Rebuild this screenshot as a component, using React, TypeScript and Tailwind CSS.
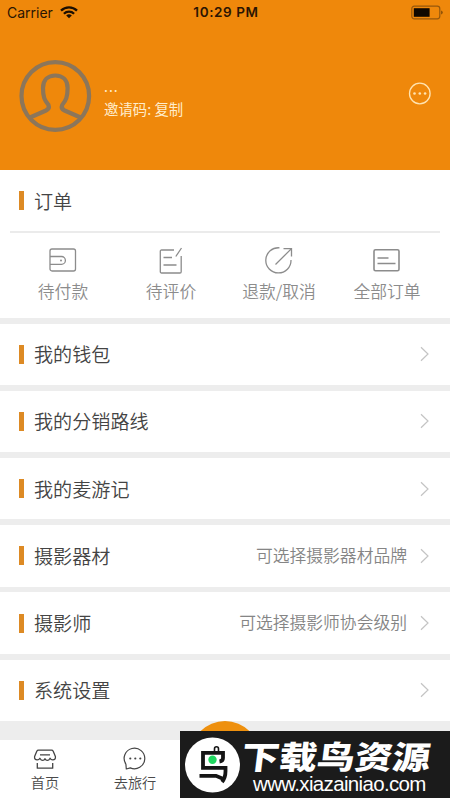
import type { ReactNode } from "react";

const orderTabs: { label: string; icon: ReactNode }[] = [
  {
    label: "待付款",
    icon: (
      <>
        <rect x="2" y="4" width="25.5" height="22" rx="2" />
        <path d="M2 11.5h11.5a3.900 3.900 0 0 1 0 7.800H2" />
        <circle cx="13" cy="15.400" r="1" fill="currentColor" stroke="none" />
      </>
    ),
  },
  {
    label: "待评价",
    icon: (
      <>
        <path d="M18 5H5.5a1.2 1.2 0 0 0-1.2 1.2v20.600a1.200 1.200 0 0 0 1.200 1.200h18.500a1.200 1.200 0 0 0 1.200-1.200V11" />
        <path d="M25.500 3 19.800 11.500M7.500 12.500h8.500M7.500 20h13" />
      </>
    ),
  },
  {
    label: "退款/取消",
    icon: (
      <>
        <path d="M15.500 2.800A12.600 12.600 0 1 0 27 15" />
        <path d="M11.500 19.500 27.500 3.600M19.500 3.600h8v8" />
      </>
    ),
  },
  {
    label: "全部订单",
    icon: (
      <g strokeWidth="1.600">
        <rect x="2" y="4.800" width="25" height="21" rx="1.500" />
        <path d="M5.500 13h11M5.500 18.500h18" />
      </g>
    ),
  },
];

const menuRows = [
  { title: "我的钱包" },
  { title: "我的分销路线" },
  { title: "我的麦游记" },
  { title: "摄影器材", value: "可选择摄影器材品牌" },
  { title: "摄影师", value: "可选择摄影师协会级别" },
  { title: "系统设置" },
];

function Title({ children }: { children: ReactNode }) {
  return (
    <div className="flex items-center">
      <span className="w-[5px] h-[19px] bg-[#dd8a24]" />
      <span className="ml-[10px] text-[19.100px] leading-7 font-[350] text-[#444]">{children}</span>
    </div>
  );
}

function StatusBar() {
  return (
    <div className="h-[25px] grid grid-cols-3 items-center pl-[7px] pr-[7px] text-[#2a1503] font-[Inter,sans-serif]">
      <div className="flex items-center gap-[7px]">
        <span className="text-[14px] leading-none">Carrier</span>
        <svg width="18" height="13" viewBox="0 0 18 13" fill="none" stroke="#1c0f02" strokeWidth="2.300">
          <path d="M1 4.700a11.500 11.500 0 0 1 16 0M3.900 7.700a7.300 7.300 0 0 1 10.200 0" />
          <path d="M9 12.300 6.200 9.500a4 4 0 0 1 5.600 0Z" fill="#1c0f02" stroke="none" />
        </svg>
      </div>
      <span className="ml-[2px] text-center text-[13.500px] leading-none font-semibold whitespace-nowrap tracking-[0.600px]">10:29 PM</span>
      <svg className="justify-self-end" width="32" height="15" viewBox="0 0 32 15">
        <rect x="0.800" y="1.200" width="28" height="12.600" rx="2.500" fill="none" stroke="#96570c" strokeWidth="1.200" />
        <rect x="2.800" y="3.200" width="15.800" height="8.600" fill="#100800" />
        <path d="M30.300 5.500v4q1.300-.5 1.300-2t-1.300-2" fill="#6b3d06" />
      </svg>
    </div>
  );
}

export default function App() {
  return (
    <main className="relative w-[450px] h-[800px] overflow-hidden flex flex-col bg-white font-['Noto_Sans_CJK_SC',sans-serif]">
      <header className="h-[170px] shrink-0 bg-[#ef880b]">
        <StatusBar />
        <div className="flex items-center pl-[19px] pr-[19px] pt-[34px]">
          <svg width="73" height="73" viewBox="0 0 73 73" fill="none" stroke="#8c765a" strokeWidth="4.200">
            <circle cx="36.300" cy="37" r="33.800" />
            <path d="M11 58.500 27 51.500Q31 49.500 29.500 46C25.500 41.500 24 38 24 29C24 21 29 16.500 36.300 16.500S48.600 21 48.600 29C48.600 38 47 41.500 43.200 46Q41.600 49.500 45.600 51.500L61.600 58.500" />
          </svg>
          <div className="ml-3 mt-[4px] flex-1 text-[#ffedcb]">
            <div className="text-[14px] leading-[18px] tracking-[1px]">...</div>
            <div className="mt-[4px] text-[14.400px] leading-5">邀请码: 复制</div>
          </div>
          <svg className="mt-[-5px]" width="23" height="23" viewBox="0 0 23 23">
            <circle cx="11.800" cy="11.500" r="10.300" fill="none" stroke="#ffe3b0" strokeWidth="1.300" />
            <g fill="#ffe3b0">
              <circle cx="6.500" cy="11.500" r="1.300" />
              <circle cx="11.800" cy="11.500" r="1.300" />
              <circle cx="17.100" cy="11.500" r="1.300" />
            </g>
          </svg>
        </div>
      </header>

      <section className="h-[148px] shrink-0">
        <div className="h-[61px] pl-[19px] flex items-center">
          <Title>订单</Title>
        </div>
        <div className="mx-[10px] h-[2px] bg-[#ebebeb]" />
        <div className="mx-[9px] pt-[12px] grid grid-cols-4">
          {orderTabs.map((tab) => (
            <div key={tab.label} className="flex flex-col items-center text-[#8c8c8c]">
              <svg width="30" height="30" viewBox="0 0 30 30" fill="none" stroke="currentColor" strokeWidth="1.300">
                {tab.icon}
              </svg>
              <span className="mt-[4px] text-[16.800px] leading-6 font-[350] whitespace-nowrap">{tab.label}</span>
            </div>
          ))}
        </div>
      </section>

      <div className="shrink-0 flex flex-col gap-[5.800px] bg-[#ededed] pt-[5.600px] pb-[19.500px]">
        {menuRows.map((row) => (
          <div key={row.title} className="h-[61.400px] bg-white flex items-center justify-between pl-[19px] pr-[20px]">
            <Title>{row.title}</Title>
            <div className="flex items-center gap-[12px]">
              <span className="text-[16.800px] font-[350] text-[#858585]">{row.value}</span>
              <svg width="11" height="16" viewBox="0 0 11 16" fill="none" stroke="#c4c4c4" strokeWidth="1.200">
                <path d="m2 1.200 7 6.800-7 6.800" />
              </svg>
            </div>
          </div>
        ))}
      </div>

      <nav className="flex-1 grid grid-cols-5 pt-[7px] text-[#4a4a4a]">
        <div className="flex flex-col items-center">
          <svg width="24" height="24" viewBox="0 0 24 24" fill="none" stroke="#444" strokeWidth="1.300" strokeLinejoin="round">
            <path d="M5.500 3.200h13q1.200 0 1.700 1l2.200 5.400q.4 3.200-2.600 3.200-2 0-2.700-1.600-1.200 2.200-2.800 2.200T12 11.700q-.7 1.700-2.300 1.700t-2.800-2.200q-.7 1.600-2.700 1.600-3 0-2.600-3.200l2.200-5.400q.5-1 1.700-1Z" />
            <path d="M7 7.800h10M4.300 16v5.200h15.400V16" />
          </svg>
          <span className="mt-[1px] text-[14.200px] leading-5 font-[350]">首页</span>
        </div>
        <div className="flex flex-col items-center">
          <svg width="24" height="24" viewBox="0 0 24 24" fill="none" stroke="#444" strokeWidth="1.200">
            <path d="M2.900 17.200A10.300 10.300 0 1 1 7.300 20.900L3.300 22Z" strokeLinejoin="round" />
            <g fill="#444" stroke="none">
              <circle cx="7.300" cy="11.500" r="1.100" />
              <circle cx="12.300" cy="11.500" r="1.100" />
              <circle cx="17.300" cy="11.500" r="1.100" />
            </g>
          </svg>
          <span className="mt-[1px] text-[14.200px] leading-5 font-[350]">去旅行</span>
        </div>
      </nav>

      {/* raised centre button */}
      <div className="absolute left-[190px] top-[721px] size-[70px] rounded-full bg-[#ee900e]" />

      <div className="absolute right-0 bottom-[2px] w-[270px] h-[67px] bg-[#1b1b1b] text-white flex items-center pl-[5px]">
        <svg className="shrink-0" width="55" height="56" viewBox="0 0 55 56">
          <circle cx="27.500" cy="28" r="27.500" fill="#fff" />
          <g fill="none" stroke="#151515" strokeWidth="3.800">
            <path d="M29.500 15v-3.200q0-2 2-2t2 2V15" strokeWidth="1.600" />
            <path d="M17.500 15.800H38V21q0 3-3.500 3.500" />
            <path d="M18 14v16.800h22.500v3.500q0 6.500-3.500 10.700" />
            <path d="M14.500 38.800h16.500l7.500 3.200" />
          </g>
          <circle cx="27.500" cy="22.800" r="4.200" fill="#20d860" />
        </svg>
        <div className="flex flex-col mt-[5px]">
          <span className="ml-[2px] h-[33px] text-[32px] leading-[33px] font-black whitespace-nowrap origin-left scale-x-[1.180] -skew-x-6">下载鸟资源</span>
          <span className="ml-[13px] mt-[1px] h-[22px] text-[20.500px] leading-[22px] tracking-[-0.660px] font-['Liberation_Sans',sans-serif]">www.xiazainiao.com</span>
        </div>
      </div>
    </main>
  );
}
